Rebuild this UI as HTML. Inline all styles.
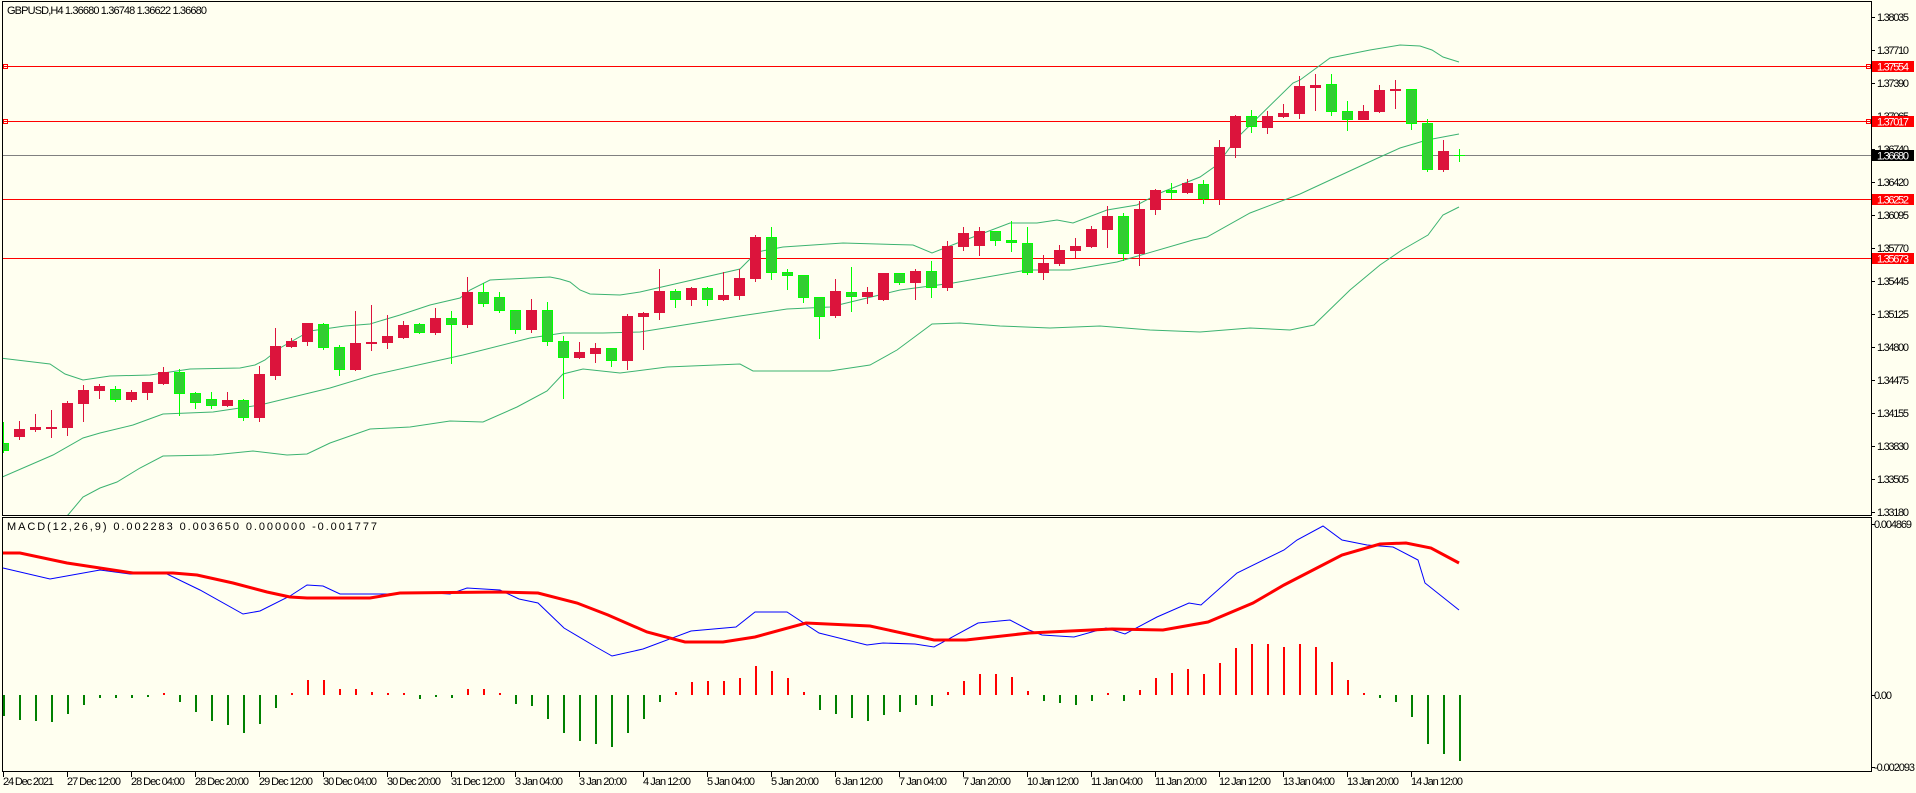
<!DOCTYPE html>
<html><head><meta charset="utf-8"><style>
html,body{margin:0;padding:0;background:#FFFFF0;}
svg{display:block;font-family:"Liberation Sans",sans-serif;}
</style></head><body>
<svg width="1916" height="793" viewBox="0 0 1916 793" xmlns="http://www.w3.org/2000/svg">
<rect width="1916" height="793" fill="#FFFFF0"/>
<defs><clipPath id="cm"><rect x="3" y="2" width="1868" height="513"/></clipPath></defs>
<g clip-path="url(#cm)">
<!-- horizontal lines -->
<g stroke="#FF0000" stroke-width="1">
<path d="M3 66.5H1871M3 121.5H1871M3 199.5H1871M3 258.5H1871"/>
</g>
<path d="M3 155.5H1871" stroke="#808080"/>
<rect x="3.5" y="64.5" width="4" height="4" fill="none" stroke="#FF0000"/>
<rect x="3.5" y="119.5" width="4" height="4" fill="none" stroke="#FF0000"/>
<rect x="1866.5" y="64.5" width="4" height="4" fill="none" stroke="#FF0000"/>
<rect x="1866.5" y="119.5" width="4" height="4" fill="none" stroke="#FF0000"/>
<!-- bollinger -->
<g fill="none" stroke="#3CB371" stroke-width="1">
<polyline points="0,358 50,364 65,374 83,380 110,376 150,375 170,372 190,369 240,368 255,365 265,360 280,348 310,331 345,326 370,324 400,315 430,305 460,298 470,290 490,280 530,278 550,277 560,279 570,282 580,290 590,294 620,295 640,292 740,269 757,252 783,247 843,243 913,245 932,253 960,242 1010,223 1037,223 1057,220 1073,223 1107,210 1137,205 1160,193 1200,177 1217,165 1237,138 1293,83 1300,80 1330,58 1370,50 1400,45 1420,46 1432,50 1443,57 1459,62"/>
<polyline points="0,478 53,455 83,438 100,433 133,425 163,414 213,412 260,405 330,388 373,375 463,355 530,338 563,333 603,333 640,332 740,316 787,309 830,307 900,290 953,283 970,280 1027,270 1070,270 1117,262 1193,240 1207,237 1250,213 1300,194 1380,157 1400,148 1427,140 1459,134"/>
<polyline points="55,522 68,515 83,497 100,488 117,482 140,468 163,456 213,455 253,451 287,455 307,454 330,443 370,429 410,427 450,421 483,422 517,407 547,391 563,374 583,369 620,373 667,367 740,364 753,371 830,371 870,365 897,350 932,324 960,323 1000,326 1050,328 1100,326 1150,330 1200,332 1250,328 1290,330 1314,325 1350,290 1380,265 1402,250 1428,235 1443,215 1459,207"/>
</g>
<!-- wicks -->
<path stroke="#DC143C" stroke-width="1" fill="none" d="M19.5 421V440M35.5 414V432M51.5 410V438M67.5 401V436M83.5 385V422M99.5 384V399M131.5 390V402M147.5 382V400M163.5 367V385M227.5 392V407M259.5 366V422M275.5 328V380M291.5 338V348M307.5 323V346M355.5 311V371M371.5 305V351M387.5 315V349M403.5 321V339M435.5 308V335M467.5 277V328M531.5 299V333M579.5 342V359M595.5 343V363M627.5 314V370M643.5 312V350M659.5 269V320M691.5 287V306M723.5 272V301M739.5 269V300M755.5 235V282M835.5 279V318M867.5 287V304M883.5 273V301M915.5 269V300M947.5 241V291M963.5 227V251M979.5 227V256M1043.5 255V280M1059.5 245V266M1075.5 238V258M1091.5 226V248M1107.5 206V248M1139.5 201V266M1155.5 189V215M1187.5 179V194M1219.5 140V205M1235.5 115V158M1267.5 111V134M1283.5 104V118M1299.5 76V119M1315.5 74V111M1363.5 105V120M1379.5 85V113M1395.5 80V109M1443.5 140V172"/>
<path stroke="#00FF00" stroke-width="1" fill="none" d="M3.5 422V453M115.5 386V402M179.5 369V416M195.5 392V409M211.5 392V409M243.5 399V421M323.5 323V350M339.5 345V376M419.5 323V334M451.5 311V364M483.5 283V307M499.5 292V313M515.5 310V334M547.5 302V346M563.5 336V399M611.5 348V367M675.5 289V308M707.5 287V306M771.5 227V280M787.5 269V290M803.5 275V303M819.5 297V339M851.5 267V312M899.5 273V285M931.5 261V298M995.5 231V246M1011.5 221V252M1027.5 227V275M1123.5 213V261M1171.5 183V199M1203.5 180V204M1251.5 110V133M1331.5 74V116M1347.5 101V131M1411.5 89V130M1427.5 119V172M1459.5 149V162M1454 155.5H1465"/>
<!-- red bodies -->
<g fill="#DC143C">
<rect x="14" y="429" width="11" height="8"/><rect x="30" y="427" width="11" height="3"/><rect x="46" y="427" width="11" height="2"/><rect x="62" y="403" width="11" height="25"/><rect x="78" y="390" width="11" height="14"/><rect x="94" y="386" width="11" height="5"/><rect x="126" y="392" width="11" height="8"/><rect x="142" y="382" width="11" height="11"/><rect x="158" y="372" width="11" height="12"/><rect x="222" y="400" width="11" height="6"/><rect x="254" y="374" width="11" height="44"/><rect x="270" y="346" width="11" height="30"/><rect x="286" y="341" width="11" height="6"/><rect x="302" y="323" width="11" height="19"/><rect x="350" y="343" width="11" height="27"/><rect x="366" y="342" width="11" height="2"/><rect x="382" y="336" width="11" height="7"/><rect x="398" y="325" width="11" height="13"/><rect x="430" y="318" width="11" height="15"/><rect x="462" y="292" width="11" height="33"/><rect x="526" y="310" width="11" height="20"/><rect x="574" y="352" width="11" height="6"/><rect x="590" y="348" width="11" height="6"/><rect x="622" y="316" width="11" height="45"/><rect x="638" y="313" width="11" height="4"/><rect x="654" y="291" width="11" height="22"/><rect x="686" y="288" width="11" height="12"/><rect x="718" y="295" width="11" height="5"/><rect x="734" y="278" width="11" height="18"/><rect x="750" y="237" width="11" height="42"/><rect x="830" y="291" width="11" height="25"/><rect x="862" y="292" width="11" height="5"/><rect x="878" y="273" width="11" height="27"/><rect x="910" y="271" width="11" height="12"/><rect x="942" y="246" width="11" height="42"/><rect x="958" y="233" width="11" height="14"/><rect x="974" y="231" width="11" height="15"/><rect x="1038" y="263" width="11" height="10"/><rect x="1054" y="250" width="11" height="14"/><rect x="1070" y="246" width="11" height="5"/><rect x="1086" y="229" width="11" height="18"/><rect x="1102" y="216" width="11" height="14"/><rect x="1134" y="209" width="11" height="45"/><rect x="1150" y="190" width="11" height="20"/><rect x="1182" y="183" width="11" height="10"/><rect x="1214" y="147" width="11" height="52"/><rect x="1230" y="116" width="11" height="32"/><rect x="1262" y="116" width="11" height="12"/><rect x="1278" y="113" width="11" height="4"/><rect x="1294" y="86" width="11" height="28"/><rect x="1310" y="85" width="11" height="3"/><rect x="1358" y="111" width="11" height="9"/><rect x="1374" y="90" width="11" height="22"/><rect x="1390" y="89" width="11" height="2"/><rect x="1438" y="151" width="11" height="19"/>
</g>
<!-- green bodies -->
<g fill="#32CD32" stroke="#00FF00" stroke-width="1">
<rect x="-1.5" y="443.5" width="10" height="7"/><rect x="110.5" y="389.5" width="10" height="10"/><rect x="174.5" y="372.5" width="10" height="21"/><rect x="190.5" y="393.5" width="10" height="9"/><rect x="206.5" y="399.5" width="10" height="6"/><rect x="238.5" y="400.5" width="10" height="17"/><rect x="318.5" y="324.5" width="10" height="23"/><rect x="334.5" y="347.5" width="10" height="22"/><rect x="414.5" y="324.5" width="10" height="8"/><rect x="446.5" y="318.5" width="10" height="6"/><rect x="478.5" y="292.5" width="10" height="11"/><rect x="494.5" y="297.5" width="10" height="13"/><rect x="510.5" y="310.5" width="10" height="19"/><rect x="542.5" y="310.5" width="10" height="31"/><rect x="558.5" y="341.5" width="10" height="16"/><rect x="606.5" y="348.5" width="10" height="12"/><rect x="670.5" y="291.5" width="10" height="8"/><rect x="702.5" y="288.5" width="10" height="11"/><rect x="766.5" y="237.5" width="10" height="35"/><rect x="782.5" y="272.5" width="10" height="3"/><rect x="798.5" y="275.5" width="10" height="22"/><rect x="814.5" y="297.5" width="10" height="19"/><rect x="846.5" y="292.5" width="10" height="4"/><rect x="894.5" y="273.5" width="10" height="9"/><rect x="926.5" y="271.5" width="10" height="16"/><rect x="990.5" y="231.5" width="10" height="9"/><rect x="1006.5" y="240.5" width="10" height="2"/><rect x="1022.5" y="243.5" width="10" height="29"/><rect x="1118.5" y="216.5" width="10" height="37"/><rect x="1166.5" y="190.5" width="10" height="2"/><rect x="1198.5" y="184.5" width="10" height="14"/><rect x="1246.5" y="116.5" width="10" height="10"/><rect x="1326.5" y="84.5" width="10" height="27"/><rect x="1342.5" y="111.5" width="10" height="8"/><rect x="1406.5" y="89.5" width="10" height="34"/><rect x="1422.5" y="123.5" width="10" height="46"/>
</g>
</g>
<!-- MACD panel -->
<g stroke-width="2" fill="none">
<path stroke="#FF0000" d="M164 695V693M292 695V693M308 695V680M324 695V680M340 695V689M356 695V689M372 695V692M388 695V693M404 695V693M468 695V689M484 695V689M500 695V693M676 695V692M692 695V682M708 695V681M724 695V681M740 695V678M756 695V666M772 695V671M788 695V678M804 695V692M948 695V692M964 695V681M980 695V674M996 695V674M1012 695V677M1028 695V691M1108 695V693M1140 695V690M1156 695V678M1172 695V673M1188 695V669M1204 695V674M1220 695V663M1236 695V648M1252 695V644M1268 695V644M1284 695V647M1300 695V644M1316 695V647M1332 695V662M1348 695V680M1364 695V693"/>
<path stroke="#008000" d="M4 695V716M20 695V720M36 695V721M52 695V722M68 695V714M84 695V705M100 695V698M116 695V698M132 695V698M148 695V697M180 695V702M196 695V712M212 695V721M228 695V725M244 695V733M260 695V724M276 695V708M420 695V699M436 695V697M452 695V698M516 695V704M532 695V706M548 695V719M564 695V733M580 695V741M596 695V744M612 695V747M628 695V733M644 695V719M660 695V702M820 695V710M836 695V714M852 695V718M868 695V721M884 695V715M900 695V712M916 695V705M932 695V706M1044 695V701M1060 695V703M1076 695V705M1092 695V701M1124 695V701M1380 695V698M1396 695V702M1412 695V717M1428 695V744M1444 695V754M1460 695V761"/>
</g>
<polyline fill="none" stroke="#0000FF" stroke-width="1" points="3,568 50,579 100,570 130,574 167,574 200,590 243,614 260,611 290,596 307,585 323,586 340,594 387,594 417,592 450,594 467,588 500,590 519,599 538,603 564,628 596,647 612,656 643,649 691,631 736,627 755,612 787,612 819,633 867,645 883,643 915,644 934,647 978,623 1010,620 1029,630 1042,635 1074,637 1106,628 1125,634 1157,617 1189,603 1201,605 1237,573 1284,550 1297,540 1323,526 1342,540 1367,545 1393,547 1418,560 1425,583 1459,610"/>
<polyline fill="none" stroke="#FF0000" stroke-width="3" points="3,553 20,553 67,563 133,573 173,573 197,575 233,583 267,592 290,597 307,598 370,598 400,593 500,592 538,593 577,603 608,615 647,632 685,642 723,642 755,637 806,623 870,626 934,640 966,640 1029,633 1112,629 1163,630 1208,622 1253,603 1284,585 1342,555 1380,544 1406,543 1431,548 1459,563"/>
<!-- frames -->
<g fill="none" stroke="#000" stroke-width="1">
<rect x="2.5" y="1.5" width="1869" height="514"/>
<rect x="2.5" y="517.5" width="1869" height="254"/>
</g>
<!-- price axis ticks -->
<path stroke="#000" d="M1871 17.5H1875M1871 50.5H1875M1871 83.5H1875M1871 116.5H1875M1871 149.5H1875M1871 182.5H1875M1871 215.5H1875M1871 248.5H1875M1871 281.5H1875M1871 314.5H1875M1871 347.5H1875M1871 380.5H1875M1871 413.5H1875M1871 446.5H1875M1871 479.5H1875M1871 512.5H1875M1871 524.5H1875M1871 695.5H1875M1871 767.5H1875"/>
<g font-size="11" fill="#000">
<text x="1877" y="21" textLength="32">1.38035</text>
<text x="1877" y="54" textLength="32">1.37710</text>
<text x="1877" y="87" textLength="32">1.37390</text>
<text x="1877" y="120" textLength="32">1.37065</text>
<text x="1877" y="153" textLength="32">1.36740</text>
<text x="1877" y="186" textLength="32">1.36420</text>
<text x="1877" y="219" textLength="32">1.36095</text>
<text x="1877" y="252" textLength="32">1.35770</text>
<text x="1877" y="285" textLength="32">1.35445</text>
<text x="1877" y="318" textLength="32">1.35125</text>
<text x="1877" y="351" textLength="32">1.34800</text>
<text x="1877" y="384" textLength="32">1.34475</text>
<text x="1877" y="417" textLength="32">1.34155</text>
<text x="1877" y="450" textLength="32">1.33830</text>
<text x="1877" y="483" textLength="32">1.33505</text>
<text x="1877" y="516" textLength="32">1.33180</text>
<text x="1874" y="528" textLength="38">0.004869</text>
<text x="1874" y="699" textLength="18">0.00</text>
<text x="1874" y="771" textLength="41">-0.002093</text>
</g>
<!-- highlighted labels -->
<rect x="1872" y="61" width="42" height="11" fill="#FF0000"/>
<rect x="1872" y="116" width="42" height="11" fill="#FF0000"/>
<rect x="1872" y="150" width="42" height="11" fill="#000"/>
<rect x="1872" y="194" width="42" height="11" fill="#FF0000"/>
<rect x="1872" y="253" width="42" height="11" fill="#FF0000"/>
<g font-size="11" fill="#FFF">
<text x="1877" y="70.5" textLength="32">1.37554</text>
<text x="1877" y="125.5" textLength="32">1.37017</text>
<text x="1877" y="159.5" textLength="32">1.36680</text>
<text x="1877" y="203.5" textLength="32">1.36252</text>
<text x="1877" y="262.5" textLength="32">1.35673</text>
</g>
<!-- header texts -->
<text x="7" y="14" font-size="11" fill="#000" textLength="200">GBPUSD,H4  1.36680 1.36748 1.36622 1.36680</text>
<text x="7" y="530" font-size="11" fill="#000" textLength="370">MACD(12,26,9) 0.002283 0.003650 0.000000 -0.001777</text>
<!-- time axis -->
<path stroke="#000" d="M3.5 772V777M67.5 772V777M131.5 772V777M195.5 772V777M259.5 772V777M323.5 772V777M387.5 772V777M451.5 772V777M515.5 772V777M579.5 772V777M643.5 772V777M707.5 772V777M771.5 772V777M835.5 772V777M899.5 772V777M963.5 772V777M1027.5 772V777M1091.5 772V777M1155.5 772V777M1219.5 772V777M1283.5 772V777M1347.5 772V777M1411.5 772V777"/>
<g font-size="11" fill="#000">
<text x="3" y="785" textLength="51">24 Dec 2021</text>
<text x="67" y="785" textLength="54">27 Dec 12:00</text>
<text x="131" y="785" textLength="54">28 Dec 04:00</text>
<text x="195" y="785" textLength="54">28 Dec 20:00</text>
<text x="259" y="785" textLength="54">29 Dec 12:00</text>
<text x="323" y="785" textLength="54">30 Dec 04:00</text>
<text x="387" y="785" textLength="54">30 Dec 20:00</text>
<text x="451" y="785" textLength="54">31 Dec 12:00</text>
<text x="515" y="785" textLength="48">3 Jan 04:00</text>
<text x="579" y="785" textLength="48">3 Jan 20:00</text>
<text x="643" y="785" textLength="48">4 Jan 12:00</text>
<text x="707" y="785" textLength="48">5 Jan 04:00</text>
<text x="771" y="785" textLength="48">5 Jan 20:00</text>
<text x="835" y="785" textLength="48">6 Jan 12:00</text>
<text x="899" y="785" textLength="48">7 Jan 04:00</text>
<text x="963" y="785" textLength="48">7 Jan 20:00</text>
<text x="1027" y="785" textLength="52">10 Jan 12:00</text>
<text x="1091" y="785" textLength="52">11 Jan 04:00</text>
<text x="1155" y="785" textLength="52">11 Jan 20:00</text>
<text x="1219" y="785" textLength="52">12 Jan 12:00</text>
<text x="1283" y="785" textLength="52">13 Jan 04:00</text>
<text x="1347" y="785" textLength="52">13 Jan 20:00</text>
<text x="1411" y="785" textLength="52">14 Jan 12:00</text>
</g>
</svg>
</body></html>
